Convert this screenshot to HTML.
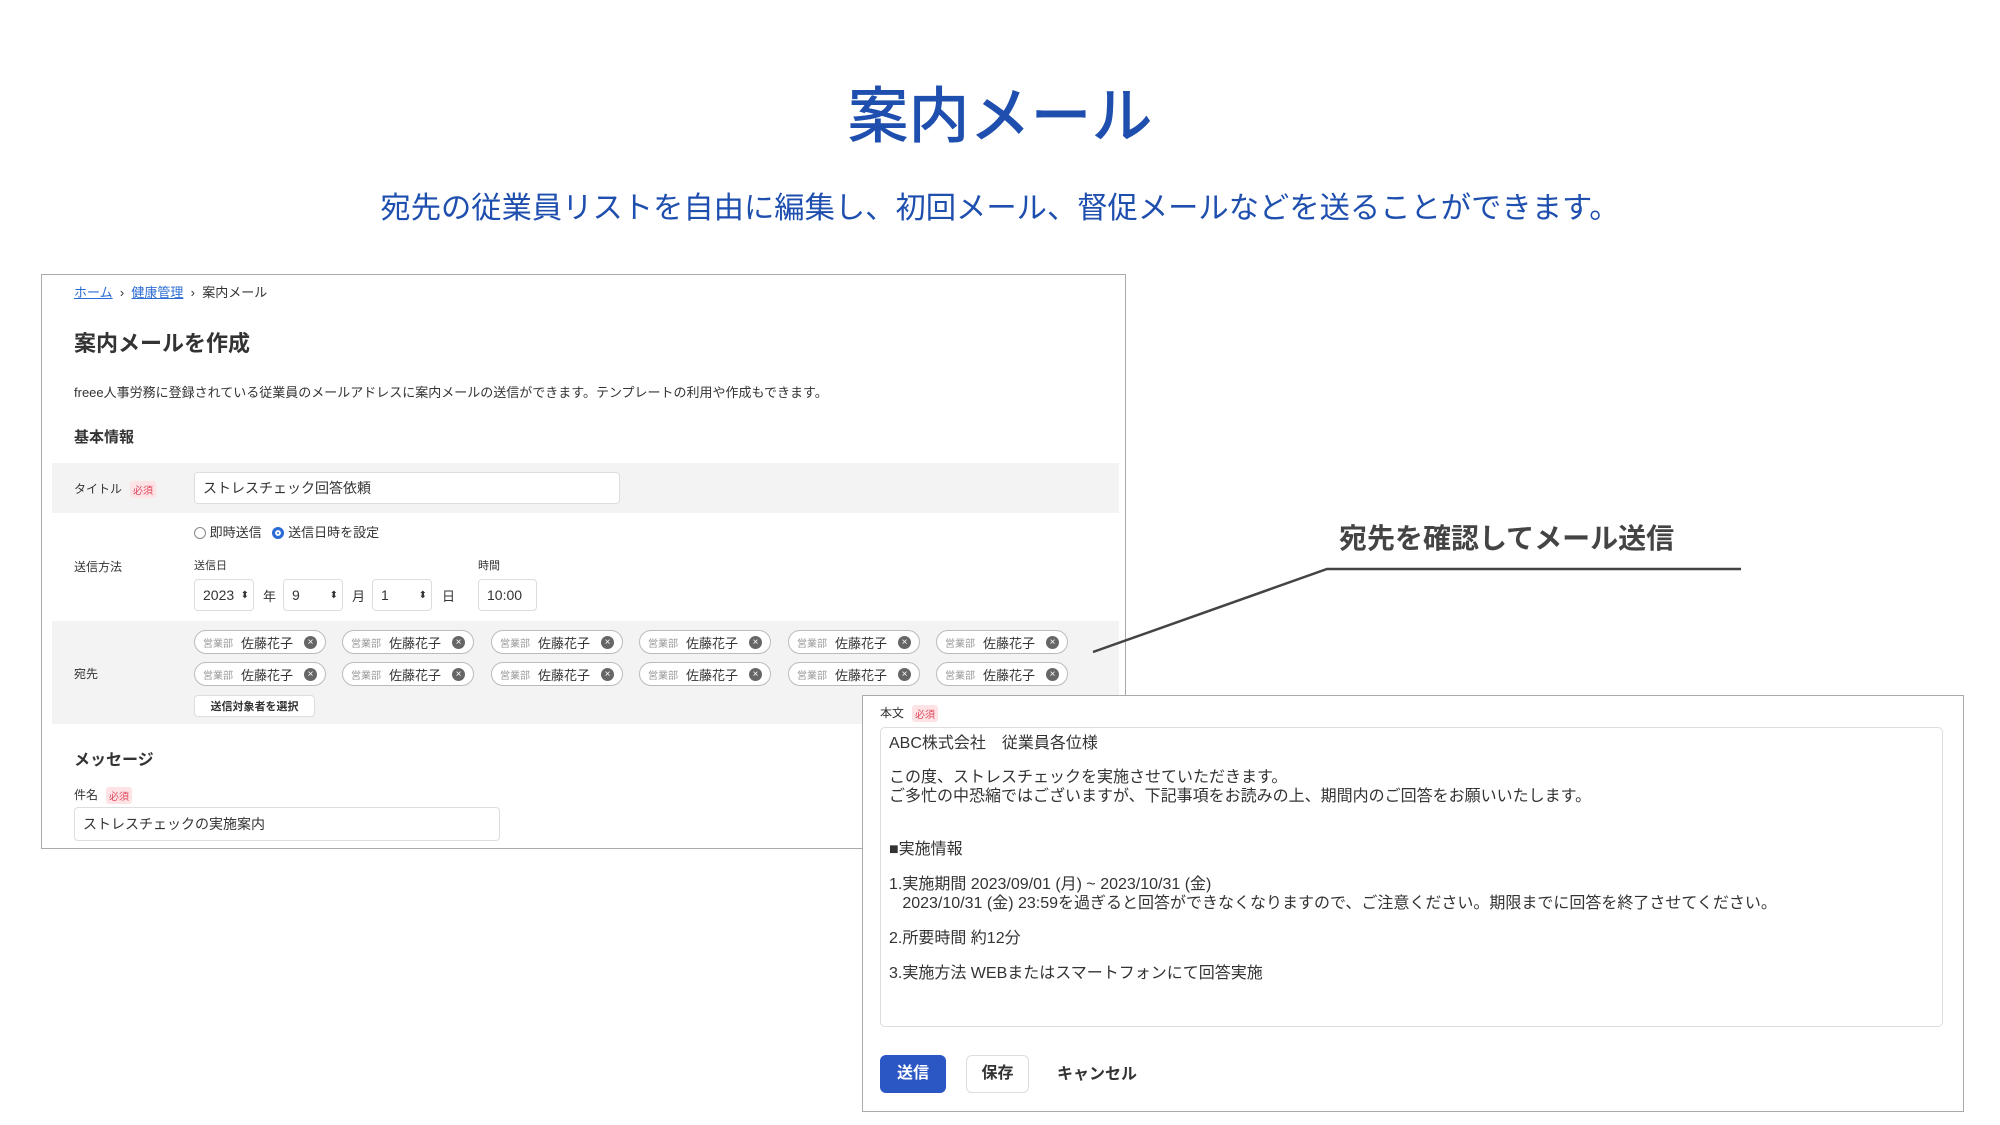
<!DOCTYPE html>
<html><head><meta charset="utf-8"><style>
*{box-sizing:border-box;margin:0;padding:0}
body{width:2000px;height:1125px;background:#fff;position:relative;overflow:hidden;font-family:"Liberation Sans","Noto Sans CJK JP",sans-serif;color:#333}
.a{position:absolute;white-space:nowrap}
.req{display:inline-block;background:#fde3e6;color:#e0475c;font-size:10px;padding:1px 3px;border-radius:3px;margin-left:8px;vertical-align:middle}
.inp{position:absolute;border:1px solid #ddd;border-radius:4px;background:#fff;font-size:14px;padding-left:8px;display:flex;align-items:center}
.chip{position:absolute;width:132px;height:24px;border:1.5px solid #bbb;border-radius:12px;background:#fff;font-size:13px;display:flex;align-items:center;padding-left:8px}
.chip small{font-size:10px;color:#999;margin-right:8px}
.chip b{font-weight:normal;color:#333}
.chip i{position:absolute;right:8px;top:5px;width:13px;height:13px;border-radius:50%;background:#666;color:#fff;font-size:10px;font-style:normal;line-height:13px;text-align:center}
.sel::after{content:"⬍";position:absolute;right:4px;font-size:10px;color:#333}
.t{font-size:16px;line-height:19px}
</style></head><body>
<div class="a" style="left:0;width:2000px;text-align:center;top:66px;font-size:61px;color:#1f4fae;font-weight:500">案内メール</div>
<div class="a" style="left:0;width:2000px;text-align:center;top:183px;font-size:30.3px;color:#1f4fae">宛先の従業員リストを自由に編集し、初回メール、督促メールなどを送ることができます。</div>

<div class="a" style="left:41px;top:274px;width:1085px;height:575px;border:1.5px solid #aaa;background:#fff"></div>
<div class="a" style="left:74px;top:282px;font-size:13px"><span style="color:#2b6cd4;text-decoration:underline">ホーム</span> &nbsp;›&nbsp; <span style="color:#2b6cd4;text-decoration:underline">健康管理</span> &nbsp;›&nbsp; 案内メール</div>
<div class="a" style="left:74px;top:326px;font-size:22px;font-weight:bold">案内メールを作成</div>
<div class="a" style="left:74px;top:382px;font-size:13px">freee人事労務に登録されている従業員のメールアドレスに案内メールの送信ができます。テンプレートの利用や作成もできます。</div>
<div class="a" style="left:74px;top:426px;font-size:15px;font-weight:bold">基本情報</div>
<div class="a" style="left:52px;top:463px;width:1067px;height:50px;background:#f4f3f3"></div>
<div class="a" style="left:74px;top:480px;font-size:12px">タイトル<span class="req">必須</span></div>
<div class="inp" style="left:194px;top:472px;width:426px;height:32px">ストレスチェック回答依頼</div>
<div class="a" style="left:194px;top:522px;font-size:13px"><span style="display:inline-block;width:12px;height:12px;border:1px solid #888;border-radius:50%;vertical-align:-2px"></span> 即時送信 &nbsp; <span style="display:inline-block;width:12px;height:12px;border:3px solid #2b6cd4;border-radius:50%;vertical-align:-2px;background:#2b6cd4;box-shadow:inset 0 0 0 2px #fff"></span> 送信日時を設定</div>
<div class="a" style="left:74px;top:558px;font-size:12px">送信方法</div>
<div class="a" style="left:194px;top:557px;font-size:11px">送信日</div>
<div class="a" style="left:478px;top:557px;font-size:11px">時間</div>
<div class="inp sel" style="left:194px;top:579px;width:60px;height:32px">2023</div>
<div class="a" style="left:263px;top:586px;font-size:13px">年</div>
<div class="inp sel" style="left:283px;top:579px;width:60px;height:32px">9</div>
<div class="a" style="left:352px;top:586px;font-size:13px">月</div>
<div class="inp sel" style="left:372px;top:579px;width:60px;height:32px">1</div>
<div class="a" style="left:442px;top:586px;font-size:13px">日</div>
<div class="inp" style="left:478px;top:579px;width:59px;height:32px">10:00</div>
<div class="a" style="left:52px;top:621px;width:1067px;height:103px;background:#f4f3f3"></div>
<div class="a" style="left:74px;top:665px;font-size:12px">宛先</div>
<div class="chip" style="left:194px;top:630px"><small>営業部</small><b>佐藤花子</b><i>×</i></div>
<div class="chip" style="left:342px;top:630px"><small>営業部</small><b>佐藤花子</b><i>×</i></div>
<div class="chip" style="left:491px;top:630px"><small>営業部</small><b>佐藤花子</b><i>×</i></div>
<div class="chip" style="left:639px;top:630px"><small>営業部</small><b>佐藤花子</b><i>×</i></div>
<div class="chip" style="left:788px;top:630px"><small>営業部</small><b>佐藤花子</b><i>×</i></div>
<div class="chip" style="left:936px;top:630px"><small>営業部</small><b>佐藤花子</b><i>×</i></div>
<div class="chip" style="left:194px;top:662px"><small>営業部</small><b>佐藤花子</b><i>×</i></div>
<div class="chip" style="left:342px;top:662px"><small>営業部</small><b>佐藤花子</b><i>×</i></div>
<div class="chip" style="left:491px;top:662px"><small>営業部</small><b>佐藤花子</b><i>×</i></div>
<div class="chip" style="left:639px;top:662px"><small>営業部</small><b>佐藤花子</b><i>×</i></div>
<div class="chip" style="left:788px;top:662px"><small>営業部</small><b>佐藤花子</b><i>×</i></div>
<div class="chip" style="left:936px;top:662px"><small>営業部</small><b>佐藤花子</b><i>×</i></div>
<div class="inp" style="left:194px;top:695px;width:121px;height:22px;font-size:11px;font-weight:bold;justify-content:center;padding:0">送信対象者を選択</div>
<div class="a" style="left:74px;top:746px;font-size:16px;font-weight:bold">メッセージ</div>
<div class="a" style="left:74px;top:786px;font-size:12px">件名<span class="req">必須</span></div>
<div class="inp" style="left:74px;top:807px;width:426px;height:34px">ストレスチェックの実施案内</div>

<svg class="a" style="left:0;top:0" width="2000" height="1125"><polyline points="1093,652 1327,569 1741,569" fill="none" stroke="#444" stroke-width="2.5"/></svg>
<div class="a" style="left:1339px;top:517px;font-size:28px;font-weight:bold;color:#444">宛先を確認してメール送信</div>

<div class="a" style="left:862px;top:695px;width:1102px;height:417px;border:1.5px solid #aaa;background:#fff"></div>
<div class="a" style="left:880px;top:704px;font-size:12px">本文<span class="req">必須</span></div>
<div class="a" style="left:880px;top:727px;width:1063px;height:300px;border:1px solid #ddd;border-radius:5px"></div>
<div class="a t" style="left:889px;top:734px">ABC株式会社　従業員各位様</div>
<div class="a t" style="left:889px;top:768px">この度、ストレスチェックを実施させていただきます。<br>ご多忙の中恐縮ではございますが、下記事項をお読みの上、期間内のご回答をお願いいたします。</div>
<div class="a t" style="left:889px;top:840px">■実施情報</div>
<div class="a t" style="left:889px;top:875px">1.実施期間 2023/09/01 (月) ~ 2023/10/31 (金)<br>&nbsp;&nbsp;&nbsp;2023/10/31 (金) 23:59を過ぎると回答ができなくなりますので、ご注意ください。期限までに回答を終了させてください。</div>
<div class="a t" style="left:889px;top:929px">2.所要時間 約12分</div>
<div class="a t" style="left:889px;top:964px">3.実施方法 WEBまたはスマートフォンにて回答実施</div>
<div class="a" style="left:880px;top:1055px;width:66px;height:38px;background:#2b57c4;border-radius:6px;color:#fff;font-size:16px;font-weight:bold;text-align:center;line-height:38px">送信</div>
<div class="a" style="left:966px;top:1055px;width:63px;height:38px;border:1px solid #ddd;border-radius:6px;font-size:16px;font-weight:bold;text-align:center;line-height:36px">保存</div>
<div class="a" style="left:1057px;top:1060px;font-size:16px;font-weight:bold">キャンセル</div>
</body></html>
